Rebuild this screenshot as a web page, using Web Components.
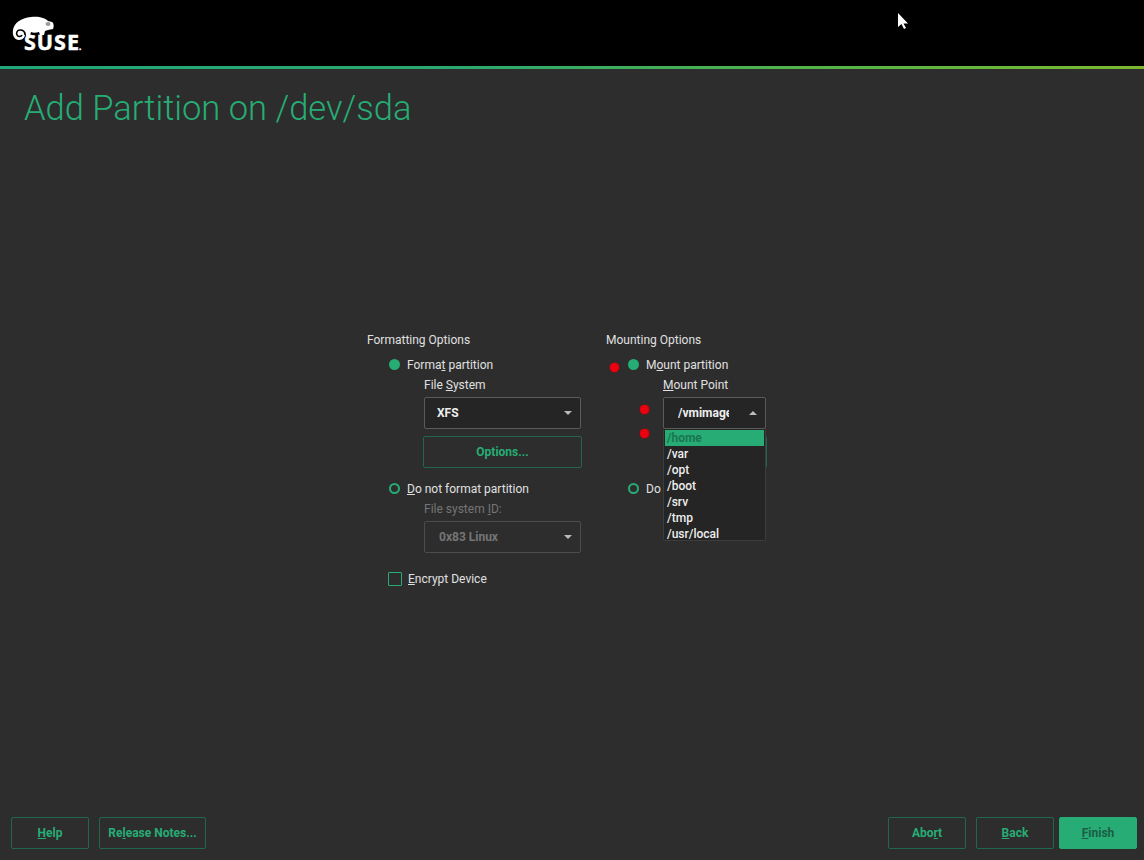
<!DOCTYPE html>
<html>
<head>
<meta charset="utf-8">
<title>Add Partition</title>
<style>
  html, body { margin: 0; height: 100%; }
  body { background: #2d2d2d; color: #e0e0e0; font: 12px Roboto, sans-serif; --green: #27ac75; }
</style>
</head>
<body>
<yast-page>
  <yast-group slot="left" label="Formatting Options">
    <yast-radio checked style="margin-top:9px">Forma<u>t</u> partition</yast-radio>
    <yast-field label="File <u>S</u>ystem" style="margin-top:4px">
      <yast-combo value="XFS" style="--pad:12px"></yast-combo>
    </yast-field>
    <yast-button style="margin:7px 0 0 56px;width:159px">Options...</yast-button>
    <yast-radio style="margin-top:13px"><u>D</u>o not format partition</yast-radio>
    <yast-field label="File system <u>I</u>D:" disabled style="margin-top:4px">
      <yast-combo value="0x83 Linux" disabled></yast-combo>
    </yast-field>
    <yast-check style="margin-top:18px"><u>E</u>ncrypt Device</yast-check>
  </yast-group>
  <yast-group slot="right" label="Mounting Options">
    <yast-radio checked style="margin-top:9px">M<u>o</u>unt partition</yast-radio>
    <yast-field label="<u>M</u>ount Point" style="margin-top:4px;width:103px">
      <yast-combo value="/vmimages" open></yast-combo>
    </yast-field>
    <yast-button style="margin:7px 0 0 57px;width:104px"></yast-button>
    <yast-radio style="margin-top:13px">Do</yast-radio>
  </yast-group>
</yast-page>
<script>
function sheet(css) { return `<style>${css}</style>`; }

class YastPage extends HTMLElement {
  constructor() {
    super();
    this.attachShadow({ mode: "open" }).innerHTML = sheet(`
      :host { display: flex; flex-direction: column; height: 860px; position: relative; overflow: hidden; }
      header { height: 66px; background: #000; position: relative; flex: none; }
      .line { height: 3px; flex: none; background: linear-gradient(90deg, #1fa878 0%, #2aa96f 40%, #5cb640 78%, #7cb82e 100%); }
      .logo { position: absolute; left: 11px; top: 15px; width: 50px; height: 26px; }
      .word { position: absolute; left: 24px; top: 29px; font: 700 21.5px/26px "Open Sans", sans-serif; color: #fff; letter-spacing: 1px; -webkit-text-stroke: .5px #fff; }
      .word i { font-style: normal; font-size: 8px; letter-spacing: 0; margin-left: -1px; }
      h1 { margin: 20px 0 0 24px; font: 300 34.5px/38px Roboto, sans-serif; color: var(--green); flex: none; }
      main { flex: 1; display: grid; grid-template-columns: 239px 200px; align-content: start; padding: 205px 0 0 367px; }
      footer { flex: none; display: flex; gap: 10px; padding: 0 7px 11px 11px; }
      footer .gap { flex: 1; }
      footer yast-button { width: 78px; }
      .dot { position: absolute; width: 9px; height: 9px; border-radius: 50%; background: #ee0010; box-shadow: 0 0 2px #c00; }
      .cursor { position: absolute; left: 897px; top: 12px; }
    `) + `
      <header>
        <svg class="logo" viewBox="0 0 50 26">
          <path fill="#fff" d="M2 15C3 8 10 3 20 2C28 1 34 3 37 6L41 7C43 8 43 12 42 14L37 15L34 16L33 20L29 20L28 17C25 18 22 18 20 17L19 21H15L14 16C15 22 12 25 8 25C4 25 1 21 2 15Z"/>
          <path fill="none" stroke="#000" stroke-width="1.600" d="M11 20C10 22 7 22 6 20C5 18 6 15 9 15C12 15 14 17 14 20"/>
          <ellipse cx="37" cy="9" rx="2.500" ry="2" fill="#9a9a9a"/>
        </svg>
        <div class="word">SUSE<i>.</i></div>
      </header>
      <div class="line"></div>
      <h1>Add Partition on /dev/sda</h1>
      <main><slot name="left"></slot><slot name="right"></slot></main>
      <footer>
        <yast-button><u>H</u>elp</yast-button>
        <yast-button style="width:107px">Re<u>l</u>ease Notes...</yast-button>
        <span class="gap"></span>
        <yast-button>Abo<u>r</u>t</yast-button>
        <yast-button><u>B</u>ack</yast-button>
        <yast-button primary style="margin-left:-5px"><u>F</u>inish</yast-button>
      </footer>
      <span class="dot" style="left:610px;top:363px"></span>
      <span class="dot" style="left:640px;top:405px"></span>
      <span class="dot" style="left:640px;top:429px"></span>
      <span class="dot" style="left:700px;top:449px;width:11px;height:11px"></span>
      <svg class="cursor" width="12" height="18" viewBox="0 0 12 18"><path d="M1 1V15L4.500 12L7 17L9 16L6.500 11.500H11Z" fill="#fff"/></svg>
    `;
  }
}

class YastGroup extends HTMLElement {
  constructor() {
    super();
    this.attachShadow({ mode: "open" }).innerHTML = sheet(`
      :host { display: flex; flex-direction: column; align-items: flex-start; }
      .t { line-height: 16px; white-space: nowrap; }
    `) + `<div class="t">${this.getAttribute("label")}</div><slot></slot>`;
  }
}

class YastRadio extends HTMLElement {
  constructor() {
    super();
    const on = this.hasAttribute("checked");
    this.attachShadow({ mode: "open" }).innerHTML = sheet(`
      :host { display: flex; align-items: center; gap: 7px; margin-left: 22px; line-height: 16px; white-space: nowrap; }
      i { width: 11px; height: 11px; border-radius: 50%; box-sizing: border-box; border: 2px solid var(--green); ${on ? "background:var(--green);" : ""} margin-top: -2px; }
    `) + `<i></i><span><slot></slot></span>`;
  }
}

class YastCheck extends HTMLElement {
  constructor() {
    super();
    this.attachShadow({ mode: "open" }).innerHTML = sheet(`
      :host { display: flex; align-items: center; gap: 6px; margin-left: 21px; line-height: 16px; white-space: nowrap; }
      i { width: 14px; height: 14px; border-radius: 1px; box-sizing: border-box; border: 1px solid var(--green); margin-top: -1px; }
    `) + `<i></i><span><slot></slot></span>`;
  }
}

class YastField extends HTMLElement {
  constructor() {
    super();
    const off = this.hasAttribute("disabled");
    this.attachShadow({ mode: "open" }).innerHTML = sheet(`
      :host { display: block; margin-left: 57px; width: 157px; }
      .l { line-height: 16px; white-space: nowrap; margin-bottom: 4px; ${off ? "color:#757575;" : ""} }
    `) + `<div class="l">${this.getAttribute("label")}</div><slot></slot>`;
  }
}

class YastCombo extends HTMLElement {
  constructor() {
    super();
    const off = this.hasAttribute("disabled");
    const open = this.hasAttribute("open");
    const items = ["/home", "/var", "/opt", "/boot", "/srv", "/tmp", "/usr/local"];
    this.attachShadow({ mode: "open" }).innerHTML = sheet(`
      :host { display: block; position: relative; ${open ? "width:103px;" : ""} }
      .box { height: 32px; box-sizing: border-box; border: 1px solid ${off ? "#4c4c4c" : "#5a5a5a"}; border-radius: 2px; background: ${off ? "#2d2d2d" : "#252525"};
        display: flex; align-items: center; padding: 0 8px 0 var(--pad, 14px); font-weight: 700; color: ${off ? "#757575" : "#eee"}; }
      .v { ${open ? "flex: none; width: 51px;" : "flex: 1;"} overflow: hidden; white-space: nowrap; }
      .a { flex: none; width: 0; height: 0; margin-left: auto; border: 4px solid transparent; ${open ? "border-bottom-color:#bbb;margin-top:-4px;" : "border-top-color:#bbb;margin-top:4px;"} }
      .pop { position: absolute; z-index: 2; left: 0; top: 32px; width: 103px; box-sizing: border-box; padding: 1px 1px 0; background: #252525; border: solid #3c3c3c; border-width: 0 1px 1px; border-radius: 0 0 2px 2px; font-weight: 500; color: #eee; height: 112px; }
      .pop div { height: 16px; line-height: 16px; padding-left: 2px; }
      .pop .sel { background: var(--green); color: #1a7550; font-weight: 700; }
    `) + `<div class="box"><span class="v">${this.getAttribute("value")}</span><span class="a"></span></div>` +
      (open ? `<div class="pop">${items.map((x, i) => `<div class="${i ? "" : "sel"}">${x}</div>`).join("")}</div>` : "");
  }
}

class YastButton extends HTMLElement {
  constructor() {
    super();
    const p = this.hasAttribute("primary");
    this.attachShadow({ mode: "open" }).innerHTML = sheet(`
      :host { display: flex; align-items: center; justify-content: center; height: 32px; box-sizing: border-box; border: 1px solid #20684c; border-radius: 2px;
        font-weight: 700; color: var(--green); white-space: nowrap; ${p ? "background:var(--green);border-color:var(--green);color:#1c5c44;" : ""} }
    `) + `<slot></slot>`;
  }
}

customElements.define("yast-page", YastPage);
customElements.define("yast-group", YastGroup);
customElements.define("yast-radio", YastRadio);
customElements.define("yast-check", YastCheck);
customElements.define("yast-field", YastField);
customElements.define("yast-combo", YastCombo);
customElements.define("yast-button", YastButton);
</script>
</body>
</html>
